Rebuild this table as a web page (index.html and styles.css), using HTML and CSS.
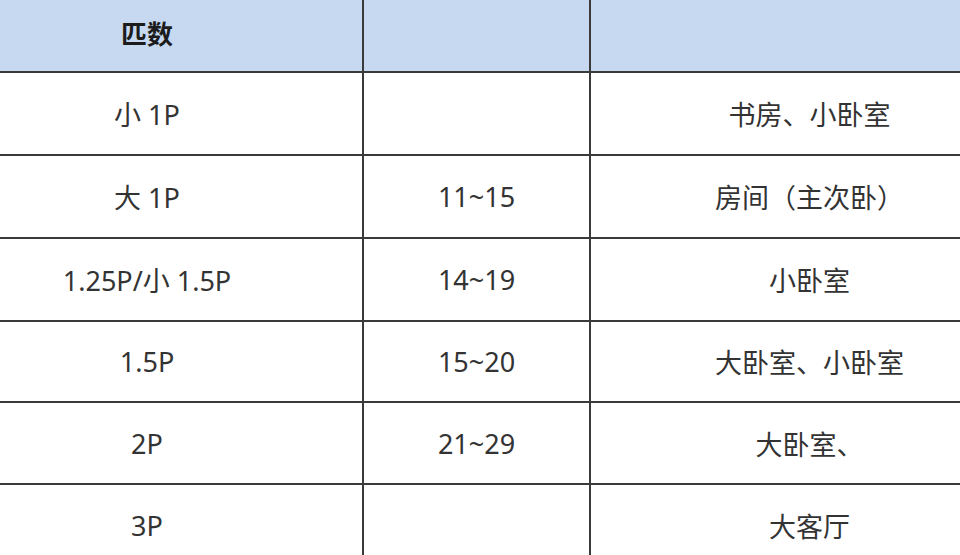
FILE: index.html
```html
<!DOCTYPE html>
<html lang="zh">
<head>
<meta charset="utf-8">
<link rel="stylesheet" href="styles.css">
</head>
<body>
<div class="sheet">
  <div class="cell head c1">匹数</div>
  <div class="cell head c2"></div>
  <div class="cell head c3"></div>

  <div class="cell c1">小 1P</div>
  <div class="cell c2"></div>
  <div class="cell c3">书房、小卧室</div>

  <div class="cell c1">大 1P</div>
  <div class="cell c2">11~15</div>
  <div class="cell c3">房间（主次卧）</div>

  <div class="cell c1">1.25P/小 1.5P</div>
  <div class="cell c2">14~19</div>
  <div class="cell c3">小卧室</div>

  <div class="cell c1">1.5P</div>
  <div class="cell c2">15~20</div>
  <div class="cell c3">大卧室、小卧室</div>

  <div class="cell c1">2P</div>
  <div class="cell c2">21~29</div>
  <div class="cell c3">大卧室、</div>

  <div class="cell c1 last">3P</div>
  <div class="cell c2 last"></div>
  <div class="cell c3 last">大客厅</div>
</div>
</body>
</html>
```

FILE: styles.css
```css
html, body {
  margin: 0;
  padding: 0;
  background: #ffffff;
}
body {
  width: 960px;
  height: 555px;
  overflow: hidden;
  font-family: "Noto Sans", "Noto Sans CJK SC", sans-serif;
}
.sheet {
  display: grid;
  grid-template-columns: 364px 227px 369px;
  grid-template-rows: 73px 83px 83px 83px 81px 82px 80px;
}
.cell {
  display: flex;
  align-items: center;
  justify-content: center;
  font-size: 27px;
  color: #333333;
  border-bottom: 2px solid #3a3a3a;
  box-sizing: border-box;
}
.cell.last {
  border-bottom: none;
}
.c1 {
  border-right: 2px solid #3a3a3a;
  padding-right: 68px;
}
.c2 {
  border-right: 2px solid #3a3a3a;
}
.c3 {
  padding-left: 68px;
}
.head {
  background: #c6d9f1;
  font-weight: 700;
  color: #1c1c1c;
  font-size: 26px;
  padding-bottom: 6px;
}
```
